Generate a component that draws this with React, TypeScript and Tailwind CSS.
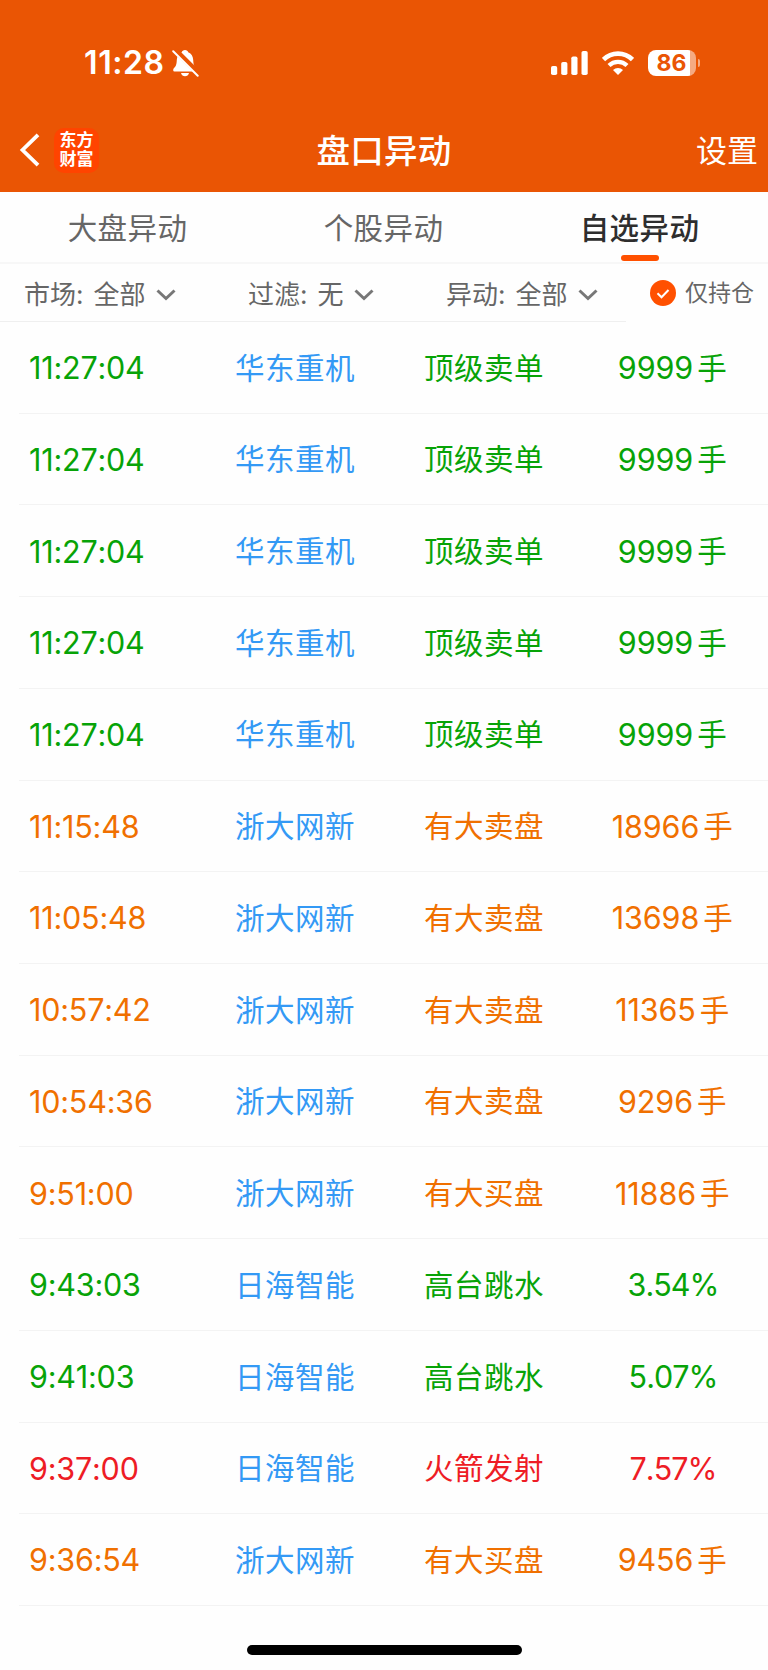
const FONT = 'font-[Inter,"Noto_Sans_CJK_SC",sans-serif]';

type Row = { time: string; name: string; kind: string; value: string; unit?: string; color: string };

const GREEN = "text-[#07a307]";
const ORANGE = "text-[#f07000]";
const RED = "text-[#ee1c25]";

const sell: Row = { time: "11:27:04", name: "华东重机", kind: "顶级卖单", value: "9999", unit: "手", color: GREEN };

const rows: Row[] = [
  sell,
  sell,
  sell,
  sell,
  sell,
  { time: "11:15:48", name: "浙大网新", kind: "有大卖盘", value: "18966", unit: "手", color: ORANGE },
  { time: "11:05:48", name: "浙大网新", kind: "有大卖盘", value: "13698", unit: "手", color: ORANGE },
  { time: "10:57:42", name: "浙大网新", kind: "有大卖盘", value: "11365", unit: "手", color: ORANGE },
  { time: "10:54:36", name: "浙大网新", kind: "有大卖盘", value: "9296", unit: "手", color: ORANGE },
  { time: "9:51:00", name: "浙大网新", kind: "有大买盘", value: "11886", unit: "手", color: ORANGE },
  { time: "9:43:03", name: "日海智能", kind: "高台跳水", value: "3.54%", color: GREEN },
  { time: "9:41:03", name: "日海智能", kind: "高台跳水", value: "5.07%", color: GREEN },
  { time: "9:37:00", name: "日海智能", kind: "火箭发射", value: "7.57%", color: RED },
  { time: "9:36:54", name: "浙大网新", kind: "有大买盘", value: "9456", unit: "手", color: ORANGE },
];

function StatusBar() {
  return (
    <div className="flex h-[108px] items-center pl-[84px] pr-[67px] pt-[17px]">
      <span className="w-[80px] whitespace-nowrap text-[32px] font-semibold leading-none tracking-[0.600px] [font-kerning:none]">11:28</span>
      <svg className="ml-[8px] h-[28px] w-[27px]" viewBox="0 0 27 28" fill="none">
        <path
          d="M13 1c-1.8 0-2.8 1-3.2 2.2C6.400 4.500 5 7.300 4.800 11c-.2 4.500-.8 6.200-3 8.200-.9.900-.9 3.300.6 3.300h21.200c1.600 0 1.600-2.300.6-3.300-2.200-2-2.800-3.700-3-8.200-.2-3.700-1.600-6.500-5-7.800C15.800 2 14.800 1 13 1Z"
          fill="#fff"
        />
        <path d="M9 24h8c-.6 2.200-2 3.300-4 3.300S9.600 26.200 9 24Z" fill="#fff" />
        <path d="M2.200 0.200 26.500 24.500" stroke="#ea5504" strokeWidth="5.500" />
        <path d="M1.200 2.200 25.700 26.700" stroke="#fff" strokeWidth="2" strokeLinecap="round" />
      </svg>
      <svg className="ml-auto h-[24px] w-[37px]" viewBox="0 0 37 24" fill="#fff">
        <rect x="0" y="15" width="6.200" height="9" rx="1.800" />
        <rect x="10.200" y="11" width="6.200" height="13" rx="1.800" />
        <rect x="20.300" y="5.500" width="6.200" height="18.500" rx="1.800" />
        <rect x="30.500" y="0" width="6.200" height="24" rx="1.800" />
      </svg>
      <svg className="ml-[14px] h-[24px] w-[32px]" viewBox="0 0 32 24" fill="none">
        <path d="M1.500 8.600a20.500 20.500 0 0 1 29 0" stroke="#fff" strokeWidth="4.600" />
        <path d="M7 14.500a12.800 12.800 0 0 1 18 0" stroke="#fff" strokeWidth="4.200" />
        <path d="M16 24l-5-5.100a7.300 7.300 0 0 1 10 0Z" fill="#fff" />
      </svg>
      <div className="ml-[14px] flex h-[26px] w-[48px] items-center justify-center overflow-hidden rounded-[8px] bg-[linear-gradient(to_right,#fff_42px,#f5aa82_42px)] pt-px text-[23px] font-bold leading-none text-[#ea5504]">
        86
      </div>
      <div className="ml-[2px] mr-[1px] h-[8px] w-[2.500px] rounded-r-full bg-[#f5aa82]" />
    </div>
  );
}

function NavBar() {
  return (
    <div className="grid h-[84px] grid-cols-[1fr_auto_1fr] items-center px-[10px]">
      <div className="flex items-center">
        <svg className="ml-[9px] h-[34px] w-[21px]" viewBox="0 0 21 34" fill="none">
          <path d="M19 1.800 3.500 17 19 32.200" stroke="#fff" strokeWidth="3.800" />
        </svg>
        <div className="ml-[14px] flex h-[45px] w-[45px] flex-col items-center justify-center rounded-[10px] bg-[#ff4400] text-[17px] font-bold leading-[19px]">
          <span>东方</span>
          <span>财富</span>
        </div>
      </div>
      <h1 className="pt-[3px] text-[33.500px] font-medium leading-none tracking-[0.3px]">盘口异动</h1>
      <span className="justify-self-end text-[31px] leading-none">设置</span>
    </div>
  );
}

function Tab({ label, active }: { label: string; active?: boolean }) {
  return (
    <div className="flex h-full flex-col items-center justify-end pb-px">
      <span
        className={
          active
            ? "mr-[1px] text-[29.500px] font-medium leading-none tracking-[0.4px] text-[#2e2e2e]"
            : "mr-[1px] text-[29.500px] leading-none tracking-[0.4px] text-[#666]"
        }
      >
        {label}
      </span>
      <span className={active ? "mt-[12px] h-[6px] w-[38px] rounded-full bg-[#ff5000]" : "mt-[12px] h-[6px] w-[38px]"} />
    </div>
  );
}

function Filter({ label, value, width }: { label: string; value: string; width: string }) {
  return (
    <div className={`flex items-center text-[26px] leading-none text-[#666] ${width}`}>
      <span className="whitespace-pre">{label}:</span>
      <span className="ml-[10px]">{value}</span>
      <svg className="ml-[10px] h-[12px] w-[20px]" viewBox="0 0 20 12" fill="none">
        <path d="M1.500 1.500 10 9.500l8.500-8" stroke="#777" strokeWidth="3" />
      </svg>
    </div>
  );
}

export default function App() {
  return (
    <div className={`flex h-[1670px] w-[768px] flex-col overflow-hidden bg-[#fefefe] ${FONT}`}>
      <header className="h-[192px] shrink-0 bg-[#ea5504] text-white">
        <StatusBar />
        <NavBar />
      </header>

      <nav className="grid h-[72px] shrink-0 grid-cols-3 border-b-2 border-[#f7f7f7]">
        <Tab label="大盘异动" />
        <Tab label="个股异动" />
        <Tab label="自选异动" active />
      </nav>

      <div className="flex h-[58px] shrink-0">
        <div className="flex w-[626px] items-center border-b border-[#efefef] pl-[24px] pt-[4px]">
          <Filter label="市场" value="全部" width="w-[224px]" />
          <Filter label="过滤" value="无" width="w-[198px]" />
          <Filter label="异动" value="全部" width="w-[180px]" />
        </div>
        <div className="flex flex-1 items-center pl-[24px]">
          <svg className="h-[26px] w-[26px]" viewBox="0 0 26 26" fill="none">
            <circle cx="13" cy="13" r="13" fill="#ff5000" />
            <path d="M7.500 13.300l4 4 7-7.300" stroke="#fff" strokeWidth="2" />
          </svg>
          <span className="ml-[9px] pt-px text-[23px] leading-none text-[#666]">仅持仓</span>
        </div>
      </div>

      <main className="flex h-[1284px] shrink-0 flex-col pl-[19px]">
        {rows.map((row, i) => (
          <div
            key={i}
            className="grid min-h-0 flex-1 grid-cols-[190px_172px_206px_171px] items-center border-b border-[#f3f3f3] pt-[2px] text-[29.500px] leading-none tracking-[0.500px]"
          >
            <span className={`pl-[10px] text-[30.500px] tracking-[-0.2px] [font-kerning:none] ${row.color}`}>{row.time}</span>
            <span className="justify-self-center text-[#3399f5]">{row.name}</span>
            <span className={`justify-self-center ${row.color}`}>{row.kind}</span>
            <span className={`flex items-center justify-self-center ${row.color}`}>
              <span
                className={
                  row.unit
                    ? "text-[30.500px] tracking-[-0.1px] [font-kerning:none]"
                    : "pl-px text-[30.500px] tracking-[-1px] [font-kerning:none]"
                }
              >
                {row.value}
              </span>
              {row.unit && <span className="ml-[4px]">{row.unit}</span>}
            </span>
          </div>
        ))}
      </main>

      <footer className="flex flex-1 justify-center pt-[39px]">
        <div className="h-[10px] w-[275px] rounded-full bg-black" />
      </footer>
    </div>
  );
}
